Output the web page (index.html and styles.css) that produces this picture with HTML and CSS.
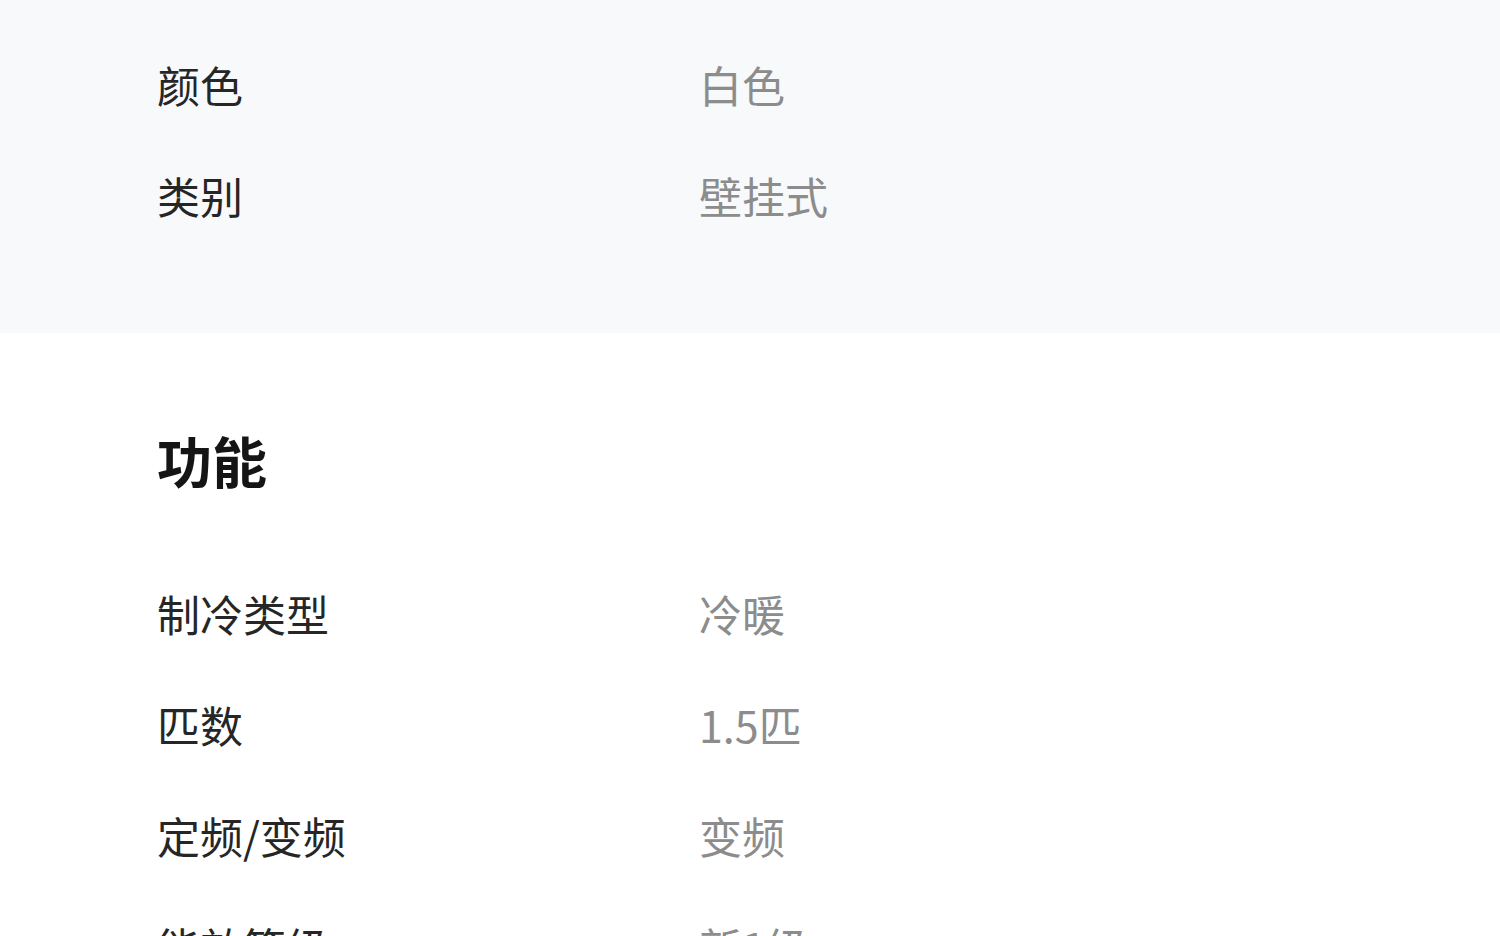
FILE: index.html
```html
<!DOCTYPE html>
<html lang="zh-CN">
<head>
  <meta charset="UTF-8">
  <title>规格参数</title>
  <link rel="stylesheet" href="styles.css">
</head>
<body>
  <div class="section section-gray">
    <div class="row"><span class="label">颜色</span><span class="value">白色</span></div>
    <div class="row"><span class="label">类别</span><span class="value">壁挂式</span></div>
  </div>

  <div class="section">
    <h2>功能</h2>
    <div class="row"><span class="label">制冷类型</span><span class="value">冷暖</span></div>
    <div class="row"><span class="label">匹数</span><span class="value">1.5匹</span></div>
    <div class="row"><span class="label">定频/变频</span><span class="value">变频</span></div>
    <div class="row"><span class="label">能效等级</span><span class="value">新1级</span></div>
  </div>
</body>
</html>
```

FILE: styles.css
```css
body {
  margin: 0;
  background-color: #fff;
  font-family: "Noto Sans CJK SC", "Noto Sans", sans-serif;
  overflow: hidden;
}

.section {
  padding: 0 0 0 157px;
}

.section-gray {
  background-color: #f8f9fb;
  padding-top: 29px;
  padding-bottom: 82px;
}

h2 {
  margin: 86px 0 59px;
  font-size: 55px;
  font-weight: bold;
  line-height: 80px;
  color: #151515;
}

.row {
  display: flex;
  height: 111px;
  line-height: 111px;
  font-size: 43px;
}

.label {
  width: 542px;
  color: #262626;
}

.value {
  color: #8c8c8c;
}
```
